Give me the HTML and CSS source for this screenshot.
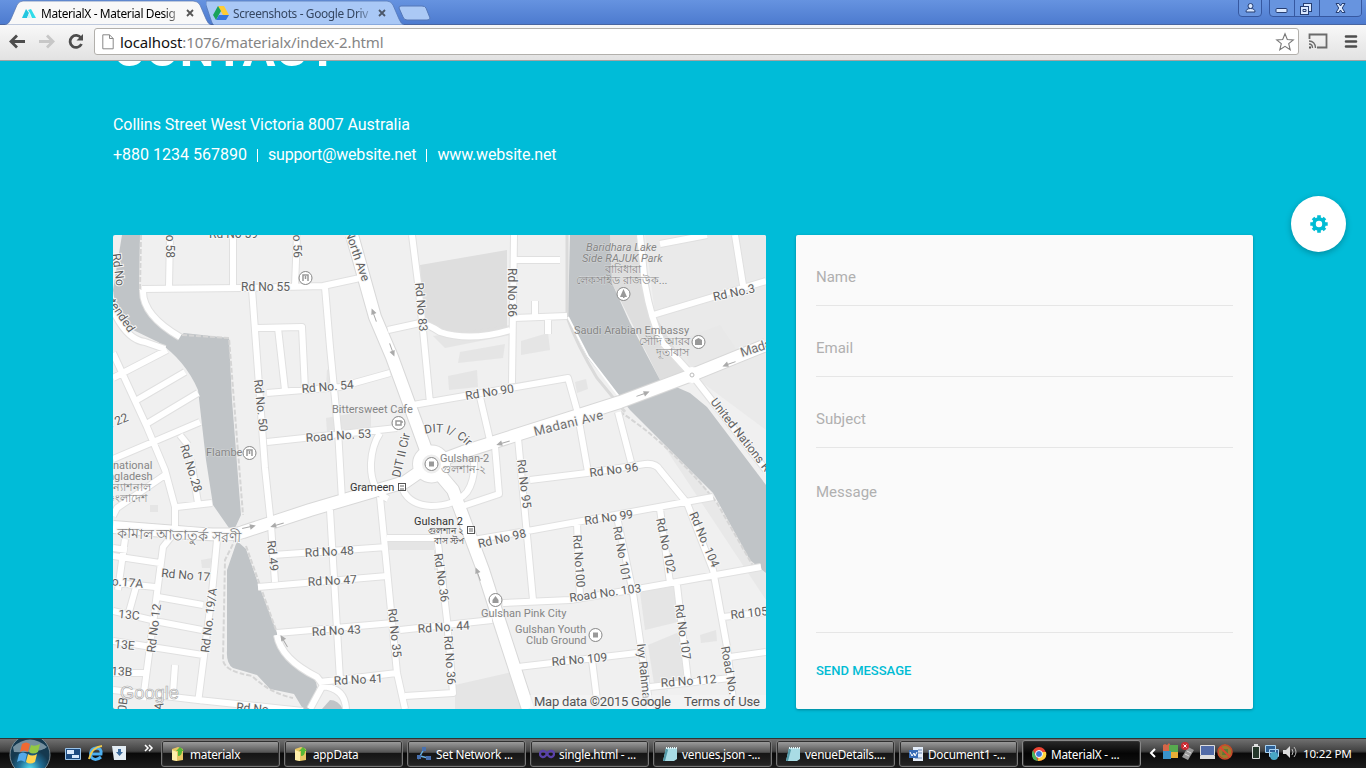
FILE: index.html
```html
<!DOCTYPE html>
<html lang="en">
<head>
<meta charset="utf-8">
<title>MaterialX - Material Design</title>
<link rel="stylesheet" href="styles.css">
</head>
<body>
<div class="screen">
  <header class="titlebar">
    <div class="tab tab-active">
      <svg class="tab-shape" width="206" height="25" viewBox="0 0 206 25"><path d="M0 25Q4 24 6 19L12 5Q14 1 18 1H188Q193 1 195 5L201 19Q203 24 206 25Z" fill="#f8f8f8" stroke="#5573ad" stroke-width=".7"/></svg>
      <svg class="favicon" width="16" height="16" viewBox="0 0 16 16"><path d="M1 13 5 4 8 8 6 13Z" fill="#21c6df"/><path d="M7 5 10 4 15 13H11L9 8Z" fill="#30dce9"/><path d="M6 13 8 8 10 13Z" fill="#c9f5fa"/></svg>
      <span class="tab-text">MaterialX - Material Desig</span><span class="tab-close"><svg width="8" height="8" viewBox="0 0 8 8"><path d="M1 1 7 7M7 1 1 7" stroke="#555" stroke-width="1.800"/></svg></span>
    </div>
    <div class="tab tab-idle">
      <svg class="tab-shape" width="200" height="25" viewBox="0 0 200 25"><path d="M0 1H181Q185 1 187 5L193 19Q195 24 198 25H8Q6 24 5 20L0 5Z" fill="#a9c8f6" stroke="#5578b8" stroke-width=".8"/></svg>
      <svg class="favicon" width="16" height="16" viewBox="0 0 16 16"><path d="M5 1H11L16 10H10Z" fill="#fc3"/><path d="M5 1 8 6 3 15 0 10Z" fill="#19a35b"/><path d="M6 10H16L13 15H3Z" fill="#3676dc"/></svg>
      <span class="tab-text">Screenshots - Google Driv</span><span class="tab-close"><svg width="8" height="8" viewBox="0 0 8 8"><path d="M1 1 7 7M7 1 1 7" stroke="#4b5769" stroke-width="1.800"/></svg></span>
    </div>
    <svg class="newtab" width="34" height="17" viewBox="0 0 34 17"><path d="M3 1H24Q27 1 28 3L32 13Q32 15 29 15H9Q6 15 5 12L1 3Q1 1 3 1Z" fill="#abc9f5" stroke="#5477b7"/></svg>
    <svg class="window-buttons" width="126" height="18" viewBox="0 0 126 18">
      <g fill="#6794df" stroke="#3658a0"><path d="M1.500-1V13Q1.500 16.500 5 16.500H21Q24.500 16.500 24.500 13V-1"/><path d="M32.500-1V13Q32.500 16.500 36 16.500H120Q124.500 16.500 124.500 13V-1M57.500 0V16.500M82.500 0V16.500"/></g>
      <g fill="#dbe9ff" stroke="#263e72" stroke-width="1"><circle cx="13.500" cy="6" r="2.500"/><path d="M9 12Q9 8.500 13.500 8.500T18 12Z"/><rect x="39" y="8.500" width="11" height="4" rx="1"/><rect x="66.500" y="3.500" width="8" height="8"/><rect x="63.500" y="6.500" width="8" height="8"/><path d="M66 9.500h3v2h-3z"/><path d="M99 3.500H102L103.500 6 105 3.500H108L105.300 8 108 12.500H105L103.500 10 102 12.500H99L101.700 8Z"/></g>
    </svg>
  </header>
  <nav class="toolbar">
    <svg class="nav-icons" width="86" height="30" viewBox="0 0 86 30"><g fill="none" stroke-width="2.800"><path d="M25 14.500H12M17 8.500 11 14.500 17 20.500" stroke="#4d4d4d"/><path d="M39 14.500H52M47 8.500 53 14.500 47 20.500" stroke="#c7c7c7"/><path d="M81 11A6 6 0 1 0 81.500 17" stroke="#4d4d4d"/></g><path d="M83 7V13.500H76.500Z" fill="#4d4d4d"/></svg>
    <div class="address">
      <svg width="12" height="16" viewBox="0 0 12 16"><path d="M.8.800H7.500L11.200 4.500V14.800H.8ZM7.500.800V4.500H11.200" fill="#fff" stroke="#888"/></svg>
      <span class="url"><span class="host">localhost</span>:1076/materialx/index-2.html</span>
      <svg class="star" width="20" height="20" viewBox="0 0 20 20"><path d="M10 1.800 12.300 7.500 18.300 7.900 13.700 11.700 15.200 17.700 10 14.400 4.800 17.700 6.300 11.700 1.700 7.900 7.700 7.500Z" fill="#fff" stroke="#777" stroke-width="1.100"/></svg>
    </div>
    <svg width="58" height="30" viewBox="0 0 58 30"><path d="M8.500 12V7.500H25.500V20.500H16" fill="none" stroke="#6b6b6b" stroke-width="1.800"/><path d="M8 14Q14 14 14.500 21M8 17Q11.500 17 11.500 21" fill="none" stroke="#6b6b6b" stroke-width="1.300"/><path d="M8 19.500h2v2H8z" fill="#555"/><path d="M45 9.500H55M45 14.500H55M45 19.500H55" stroke="#4d4d4d" stroke-width="2.600" stroke-linecap="round"/></svg>
  </nav>
  <main class="contact">
    <h1>CONTACT</h1>
    <address><div class="street">Collins Street West Victoria 8007 Australia</div><div class="links"><span>+880 1234 567890</span><span>support@website.net</span><span>www.website.net</span></div></address>
    <div class="panels">
      <svg class="map" width="653" height="474" viewBox="113 235 653 474">
        <defs>
          <path id="minor" d="M142 289 243 288 323 286 360 278M143 290Q142 315 180 337M170 235 169 287M233 235V287M297 235 295 286M252 289 265 468 271 525 275 582M257 328 302 327 305 390M278 328 285 390M267 393 340 387 390 373M325 287 330 347 338 430 342 500M267 442 397 428M412 235 418 283 423 330 430 403M388 330 420 323Q430 325 440 332Q470 342 510 330M514 235 512 383M513 260H560M514 318 567 316M535 301V317M548 318V334M413 405 430 402 568 378 577 410 588 472M480 397 490 440M495 446 499 494 460 507M518 438 533 600M618 412 631 462M530 480 587 473 645 464Q656 463 660 470L687 503 713 570 727 647 733 700M473 540 533 530 713 497M503 603 570 600 643 588 761 567M577 523 580 597M617 517 633 593 650 709M660 509 670 583M677 585 688 681M723 617 766 612M518 667 637 653M592 660 597 700M650 687 730 678M730 657 766 652M492 620 400 630M437 535 447 620 453 693 405 696M387 538H437M380 497 397 673 405 709M330 510 340 680M273 555 387 547M258 587 387 576M277 633 393 623M320 682 397 673M277 635Q281 659 317 677L323 685 310 709M322 686Q345 688 346 709M217 540 212 593 198 703M113 353 130 390 147 427 165 470 175 507 175 532 163 547 143 700M113 378 167 350M137 400 185 372M148 423 198 393M113 459 200 422M188 445 180 435M177 507 212 503M198 503 191 460M113 310Q127 340 145 342L165 349M113 516 117 508 165 475M113 548 127 550M113 556 160 563M125 539 118 590M117 583 155 587M158 597 203 605M136 587 129 612M160 622 202 630M113 611 160 622M113 641 203 655M113 673 145 673M175 665 173 693M113 690 198 700 303 711M380 433Q372 445 371 463Q370 490 388 499M403 490Q410 505 431 506Q455 506 467 492Q475 480 474 462M640 235 645 285Q651 319 662 342L692 375 766 470M660 244 707 235M735 235 743 285M653 315 766 281"/>
          <path id="major" d="M352 235 375 317 392 357 418 428 431 464 453 490 483 570 500 623 528 709M766 345 692 375 620 402 463 452 431 464 405 482 310 510 243 532Q232 537 177 532L113 527"/>
          <path id="arrow" d="M-7 .500H1V3L7 0 1-2.500V-.500H-7Z" fill="#aaa"/>
        </defs>
        <path d="M113 235H766V709H113Z" fill="#f0f0f0"/>
        <path d="M645 235H766V430L692 375 655 315Z" fill="#eaeaea"/><path d="M680 340 720 325 737 350 692 370ZM640 310 670 345 640 350ZM650 425 700 480 766 573V600Z" fill="#e8e8e8"/>
        <g fill="#dedede"><path d="M420 265 507 250V328L470 336 440 330 424 325Z"/><path d="M610 235H641L646 285 655 315 688 370 660 380 612 283Z"/><path d="M433 336 510 325V335L445 348ZM460 352 505 344 503 358 458 363ZM521 341 548 333 550 350 521 355ZM448 376 477 370 478 387 449 390ZM575 382 586 379 588 389 577 393ZM387 535H434V570H447V588H440V550H387ZM640 592 675 586 678 622 645 630ZM648 645 684 630 690 682 655 690ZM455 685 512 672 526 709H455ZM327 370 335 365 337 387 326 388ZM326 418 371 410V427L327 432ZM201 560 212 558 210 568 202 568ZM150 505 158 505 158 512 150 512ZM700 635 716 630 717 641 701 643Z" opacity=".6"/></g>
        <g fill="#c0c4c7"><path d="M122 235H140L139 290 147 311 176 338 184 333 229 338 232 400 241 515 235 528H229L213 505 206 460 198 390Q185 360 158 342L127 327 116 310 113 290Z"/><path d="M237 541 246 549 258 583 277 633 290 657 315 677 317 687 311 709H303L294 694 270 689 257 675 233 668Q226 664 227 650V570Z"/><path d="M570 235H610L612 283 630 323 660 380 690 393 707 407 766 485V573L750 560 713 493 697 477 630 410 587 357 568 317Z"/><path d="M322 709 330 700Q338 700 343 709Z"/></g>
        <path d="M567 235V317Q577 345 597 378L625 412" fill="none" stroke="#dadada" stroke-width="3"/><path d="M568 317 588 356 624 403" fill="none" stroke="#fff" stroke-width="2"/>
        <path d="M141 235 140 289M182 335 229 338 243 515M236 538 225 560 223 660Q224 671 252 676Q270 693 293 698M246 546 276 630M620 412Q668 442 717 503L753 566" fill="none" stroke="#d5d5d5" stroke-width="2" stroke-dasharray="5 2"/>
        <g fill="none" stroke-linejoin="round"><use href="#minor" stroke="#e0e0e0" stroke-width="8"/><use href="#major" stroke="#d8d8d8" stroke-width="14"/><circle cx="431.500" cy="464" r="14" stroke="#dcdcdc" stroke-width="11"/><use href="#minor" stroke="#fff" stroke-width="6"/><use href="#major" stroke="#fff" stroke-width="12"/><circle cx="431.500" cy="464" r="14" fill="#eee" stroke="#fff" stroke-width="9"/><circle cx="692" cy="375" r="8" fill="#fff"/><circle cx="692" cy="375" r="2" stroke="#bbb"/></g>
        <use href="#arrow" transform="translate(374 315) rotate(-110)"/><use href="#arrow" transform="translate(392 350) rotate(70)"/><use href="#arrow" transform="translate(503 443) rotate(163)"/><use href="#arrow" transform="translate(643 394) rotate(-20)"/><use href="#arrow" transform="translate(729 364) rotate(160)"/><use href="#arrow" transform="translate(249 527) rotate(-12)"/><use href="#arrow" transform="translate(277 525) rotate(164)"/><use href="#arrow" transform="translate(478 574) rotate(-110)"/><use href="#arrow" transform="translate(284 641) rotate(-120)"/>
        <g class="road-labels">
          <text transform="translate(241 291)">Rd No 55</text><text transform="translate(209 238)">Rd No 59</text><text transform="translate(166 209) rotate(90)">Rd No 58</text><text transform="translate(292 209) rotate(88)">Rd No 56</text><text transform="translate(345 232) rotate(71)">North Ave</text><text transform="translate(415 283) rotate(85)">Rd No 83</text><text transform="translate(508 268) rotate(90)">Rd No 86</text><text transform="translate(302 393) rotate(-5)">Rd No. 54</text><text transform="translate(306 442) rotate(-4)">Road No. 53</text><text transform="translate(254 380) rotate(84)">Rd No. 50</text><text transform="translate(112 254) rotate(82)">Rd No</text><text transform="translate(101 292) rotate(56)">Extended</text><text transform="translate(97 434) rotate(-23)">No. 22</text><text transform="translate(180 446) rotate(73)">Rd No.28</text><text transform="translate(466 400) rotate(-9)">Rd No 90</text><text class="avenue" transform="translate(535 436) rotate(-14)" textLength="71">Madani Ave</text><text class="avenue" transform="translate(742 357) rotate(-18)" textLength="42">Madani</text><text transform="translate(714 301) rotate(-12)">Rd No.3</text><text transform="translate(710 402) rotate(52)">United Nations Rd</text><text transform="translate(400 478) rotate(-77)">DIT II Cir</text>
          <path id="dit-arc" d="M425 434Q450 427 470 449" fill="none"/><text><textPath href="#dit-arc">DIT I/ Cir</textPath></text>
          <text transform="translate(517 460) rotate(83)">Rd No 95</text><text transform="translate(590 477) rotate(-7)">Rd No 96</text><text transform="translate(479 548) rotate(-13)">Rd No 98</text><text transform="translate(585 525) rotate(-8)">Rd No 99</text><text transform="translate(573 535) rotate(86)">Rd No100</text><text transform="translate(613 527) rotate(80)">Rd No 101</text><text transform="translate(656 519) rotate(78)">Rd No 102</text><text transform="translate(689 514) rotate(67)">Rd No. 104</text><text transform="translate(570 602) rotate(-8)">Road No. 103</text><text transform="translate(731 619) rotate(-6)">Rd 105</text><text transform="translate(552 666) rotate(-5)">Rd No 109</text><text transform="translate(661 687) rotate(-4)">Rd No 112</text><text transform="translate(675 605) rotate(82)">Rd No 107</text><text transform="translate(637 644) rotate(84)">Ivy Rahman</text><text transform="translate(721 647) rotate(80)">Road No.</text><text transform="translate(418 633) rotate(-4)">Rd No. 44</text><text transform="translate(434 554) rotate(82)">Rd No 36</text><text transform="translate(444 636) rotate(86)">Rd No 36</text><text transform="translate(388 609) rotate(84)">Rd No 35</text><text transform="translate(305 557) rotate(-3)">Rd No 48</text><text transform="translate(308 586) rotate(-3)">Rd No 47</text><text transform="translate(312 636) rotate(-3)">Rd No 43</text><text transform="translate(334 685) rotate(-3)">Rd No 41</text><text transform="translate(267 541) rotate(84)">Rd 49</text><text transform="translate(161 577) rotate(5)">Rd No 17</text><text transform="translate(86 583) rotate(5)">Rd No.17A</text><text transform="translate(118 618) rotate(5)">13C</text><text transform="translate(114 648) rotate(5)">13E</text><text transform="translate(111 675) rotate(3)">13B</text><text transform="translate(155 653) rotate(-83)">Rd No 12</text><text transform="translate(209 653) rotate(-83)">Rd No. 19/A</text><text transform="translate(236 711) rotate(5)">Rd No</text><text transform="translate(126 712) rotate(-83)">0B</text><text transform="translate(162 711) rotate(-78)">A</text>
          <text class="bengali-road" transform="translate(117 538) rotate(2)">কামাল আতাতুর্ক সরণী</text>
        </g>
        <g class="place-labels">
          <text x="332" y="413">Bittersweet Cafe</text><text x="206" y="456">Flambe</text><text x="574" y="334">Saudi Arabian Embassy</text><text x="639" y="345">সৌদি আরব</text><text x="656" y="356">দূতাবাস</text><g font-style="italic"><text x="586" y="251">Baridhara Lake</text><text x="582" y="262">Side RAJUK Park</text></g><text x="605" y="273">বারিধারা</text><text x="576" y="284">লেকসাইড রাজউক...</text><text x="440" y="462">Gulshan-2</text><text x="441" y="473">গুলশান-২</text><text x="481" y="617">Gulshan Pink City</text><text x="515" y="633">Gulshan Youth</text><text x="526" y="644">Club Ground</text><text x="113" y="469">national</text><text x="108" y="480">ngladesh</text><text x="107" y="491">রন্যাশনাল</text><text x="105" y="502">ংলাদেশ</text>
          <g class="station"><text x="350" y="491">Grameen</text><text x="414" y="525">Gulshan 2</text><text class="station-bn" x="428" y="534">গুলশান ২</text><text class="station-bn" x="434" y="544">বাস স্টপ</text></g>
        </g>
        <g fill="#fff" stroke="#888"><circle cx="305.500" cy="278" r="6.500"/><circle cx="398.500" cy="423" r="6.500"/><circle cx="249.500" cy="453" r="6.500"/><circle cx="431.500" cy="464" r="6.500"/><circle cx="623.500" cy="294" r="6.500"/><circle cx="698.500" cy="342" r="6.500"/><circle cx="495.500" cy="600" r="6.500"/><circle cx="595.500" cy="635" r="6.500"/><rect x="398.500" y="483.500" width="7" height="7" stroke="#555"/><rect x="467.500" y="526.500" width="7" height="7" stroke="#555"/></g>
        <g fill="none" stroke="#999" stroke-width="1.500"><path d="M303 281V275H308V281M305.500 276V279M247 456V450H252V456M249.500 451V454M396 421H401V425H396ZM401 422H403M400 486H404M400 489H404M469 529H473M469 531H473"/></g>
        <g fill="#999"><path d="M429 461.500h5v5h-5zM593 632.500h5v5h-5zM695 340 698.500 338 702 340V345H695ZM623.500 289 627 297H620ZM623 296h1.500v2H623zM492.500 603V600L495.500 596 498.500 600V603Z"/></g>
        <text class="google-logo" x="120" y="699" textLength="59" lengthAdjust="spacingAndGlyphs">Google</text>
        <path d="M530 695H766V709H530Z" fill="#f5f5f5" opacity=".65"/><g class="map-credit"><text x="534" y="706" textLength="137">Map data ©2015 Google</text><text x="684" y="706" textLength="76">Terms of Use</text></g>
      </svg>
      <form class="card"><div class="field">Name</div><div class="field">Email</div><div class="field">Subject</div><div class="field message">Message</div><div class="send">SEND MESSAGE</div></form>
    </div>
    <div class="settings"><svg width="18" height="18" viewBox="-9 -9 18 18"><circle r="5" fill="none" stroke="#00bcd4" stroke-width="3.600"/><g stroke="#00bcd4" stroke-width="3.600"><path d="M0-8.700V-5M0 5V8.700M-8.700 0H-5M5 0H8.700M-6-6-4-4M4 4 6 6M-6 6-4 4M4-4 6-6"/></g></svg></div>
  </main>
  <footer class="taskbar">
    <svg class="start" width="56" height="30" viewBox="0 0 56 30"><defs><radialGradient id="orb" cy=".85"><stop stop-color="#58e0f2"/><stop offset=".55" stop-color="#217098"/><stop offset="1" stop-color="#15394f"/></radialGradient></defs><circle cx="30" cy="16" r="20" fill="url(#orb)" stroke="#788992"/><path d="M13 8Q30-7 47 8Q40 14 14 13Z" fill="#a9bdc9" opacity=".65"/><path d="M22 5Q26 2 30 5L28 13Q24 10 20 13Z" fill="#ef6932"/><path d="M31 6Q35 8 40 5L38 13Q33 16 29 13Z" fill="#91c846"/><path d="M19 15Q23 12 27 15L25 23Q21 20 17 23Z" fill="#54a9e9"/><path d="M28 15Q32 18 37 15L35 23Q30 26 26 23Z" fill="#ffd34d"/></svg>
    <svg class="quick" width="105" height="30" viewBox="0 0 105 30"><path d="M9.500 9.500H24.500V20.500H9.500Z" fill="#1d4b80" stroke="#9bc4e9"/><path d="M11 11h7v4h-7zM16 16h7v3h-7z" fill="#d8e9fb"/><g fill="none"><path d="M45 18Q39 23 35 18Q33 10 40 9Q46 9 45 15H36" stroke="#4dafef" stroke-width="3"/><path d="M33 20Q36 8 46 7" stroke="#edc94d" stroke-width="2"/></g><path d="M56 7H70V21H58Z" fill="#e3edf4"/><path d="M62 10H65V13H67L63.500 17 60 13H62Z" fill="#3b6a9c"/><path d="M89 6 92 9 89 12M93 6 96 9 93 12" fill="none" stroke="#fff" stroke-width="1.500"/></svg>
    <div class="task"><svg class="task-icon" viewBox="0 0 16 16"><path d="M2 3 8 1 13 3V14L7 15 2 14Z" fill="#e7c765"/><path d="M2 4 7 6V15L2 14Z" fill="#fff0aa"/><path d="M6 5 10 1 14 5H12Q12 10 8 10V5Z" fill="#57b836"/></svg>materialx</div>
    <div class="task"><svg class="task-icon" viewBox="0 0 16 16"><path d="M2 3 8 1 13 3V14L7 15 2 14Z" fill="#e7c765"/><path d="M2 4 7 6V15L2 14Z" fill="#fff0aa"/><path d="M6 5 10 1 14 5H12Q12 10 8 10V5Z" fill="#57b836"/></svg>appData</div>
    <div class="task"><svg class="task-icon" viewBox="0 0 16 16"><path d="M8 3 4 10 12 12M4 10 2 13" stroke="#65aee0" fill="none" stroke-width="1.500"/><path d="M6 1h4v4H6zM1 9h4v4H1zM10 10h5v4h-5z" fill="#4770af"/></svg>Set Network ...</div>
    <div class="task"><svg class="task-icon" viewBox="0 0 16 16"><path d="M8 8C5 3 1 5 1 8S5 13 8 8 15 5 15 8 11 13 8 8" fill="none" stroke="#5942aa" stroke-width="2.300"/></svg>single.html - ...</div>
    <div class="task"><svg class="task-icon" viewBox="0 0 16 16"><path d="M4 2H15V13L12 15H1Z" fill="#a9dce5"/><path d="M4 2 1 15H3L6 4Z" fill="#5399a7"/><path d="M4 2H15" stroke="#e5f6f8" stroke-width="2" stroke-dasharray="1 1"/></svg>venues.json -...</div>
    <div class="task"><svg class="task-icon" viewBox="0 0 16 16"><path d="M4 2H15V13L12 15H1Z" fill="#a9dce5"/><path d="M4 2 1 15H3L6 4Z" fill="#5399a7"/><path d="M4 2H15" stroke="#e5f6f8" stroke-width="2" stroke-dasharray="1 1"/></svg>venueDetails....</div>
    <div class="task"><svg class="task-icon" viewBox="0 0 16 16"><path d="M5 1H15V15H5Z" fill="#e4edf9"/><path d="M10 4H14M10 7H14M7 12H14" stroke="#6684af"/><path d="M1 4H10V12H1Z" fill="#386cb6"/><path d="M2 6 4 10 6 7 7 10 9 6" fill="none" stroke="#fff"/></svg>Document1 -...</div>
    <div class="task task-active"><svg class="task-icon" viewBox="0 0 16 16"><circle cx="8" cy="8" r="7" fill="#eb4434"/><path d="M2 4 7 15Q0 14 1 7Z" fill="#49b45e"/><path d="M8 6H15Q17 14 7 15Z" fill="#ffd33d"/><circle cx="8" cy="8" r="3.500" fill="#3978d8" stroke="#fff"/></svg>MaterialX - ...</div>
    <svg class="tray" width="158" height="30" viewBox="0 0 158 30"><path d="M14 10 10 14 14 18" fill="none" stroke="#fff" stroke-width="2"/><path d="M22 6 24 5 26 6 28 4 30 7V12H22Z" fill="#d66647"/><path d="M28 6H37V13H28Z" fill="#57a94f"/><path d="M22 12H30V20H22Z" fill="#3992c9"/><path d="M30 13H37V19H30Z" fill="#e8ae36"/><path d="M47 8 53 11 47 21 41 18Z" fill="#999"/><path d="M46 12 50 14M44 15 48 17" stroke="#ddd"/><circle cx="44" cy="7" r="4" fill="#cc2c33"/><path d="M42.500 5.500 45.500 8.500M45.500 5.500 42.500 8.500" stroke="#fff"/><path d="M59.500 6.500H73.500V16.500H59.500Z" fill="#526ba7" stroke="#ddd"/><path d="M59 18.500H74" stroke="#ddd" stroke-width="3"/><path d="M78 9 84 5 91 10 90 18 83 20 77 16Z" fill="#9e7a2e"/><path d="M82 10H87V16H81Z" fill="#5c7b37"/><circle cx="84" cy="13" r="7" fill="none" stroke="#c84b2b" stroke-width="1.500"/><path d="M79 8 89 18" stroke="#e04530" stroke-width="2"/><path d="M111.500 7.500H118.500V19.500H111.500Z" fill="#25372a" stroke="#ddd"/><path d="M113 5h4v2h-4z" fill="#ddd"/><path d="M124.500 6.500H134.500V13.500H124.500ZM128.500 10.500H137.500V17.500H128.500Z" fill="#2d6197" stroke="#a9d2f1"/><circle cx="133" cy="17" r="4" fill="#48a7c5"/><path d="M142 11H145L149 7V19L145 15H142Z" fill="#ddd"/><path d="M151 10Q153 13 151 16M153 8Q157 13 153 18" fill="none" stroke="#bbb"/></svg>
    <span class="clock">10:22 PM</span>
  </footer>
</div>
</body>
</html>
```
FILE: styles.css
```css
* { box-sizing: border-box; }
body { margin: 0; overflow: hidden; font-family: Roboto, sans-serif; }
.screen { width: 1366px; height: 768px; display: flex; flex-direction: column; overflow: hidden; }
svg { flex: none; display: block; }
.titlebar { height: 25px; flex: none; display: flex; position: relative; padding-left: 5px; background: linear-gradient(#6693e0, #4d7bcf); border-bottom: 1px solid #4865a0; font: 12px "Noto Sans", sans-serif; }
.tab { position: relative; height: 25px; display: flex; align-items: center; }
.tab-active { width: 203px; padding-left: 16px; z-index: 2; }
.tab-idle { width: 190px; padding-left: 5px; color: #354762; }
.tab-shape { position: absolute; left: 0; top: 0; z-index: -1; }
.tab-idle { z-index: 1; }
.tab-idle .tab-shape { left: -2px; }
.favicon { margin-right: 4px; }
.tab-text { width: 137px; overflow: hidden; white-space: nowrap; line-height: 20px; font-size: 11.9px; letter-spacing: -.36px; -webkit-mask-image: linear-gradient(90deg, #000 90%, rgba(0,0,0,.3)); mask-image: linear-gradient(90deg, #000 90%, rgba(0,0,0,.3)); }
.tab-close { margin-left: 8px; }
.newtab { margin-top: 5px; }
.window-buttons { margin-left: auto; margin-right: 3px; }
.toolbar { height: 36px; flex: none; display: flex; align-items: center; padding: 0 7px 2px 0; background: linear-gradient(#f8f8f8, #e2e2e2); border-bottom: 1px solid #a3a3a3; z-index: 2; }
.address { width: 1205px; height: 27px; margin: 0 2px 0 8px; display: flex; align-items: center; gap: 6px; padding: 0 3px 0 7px; border: 1px solid #b2b0ac; border-radius: 3px; background: #fff; font: 15px "Noto Sans", sans-serif; letter-spacing: -.12px; }
.url { color: #858585; white-space: nowrap; line-height: 24px; }
.host { color: #111; }
.star { margin-left: auto; }
.contact { flex: 1; min-height: 0; position: relative; overflow: hidden; background: #00bcd8; padding: 0 113px; color: #fff; }
h1 { font-size: 49px; line-height: 48px; margin: -35px 0 0; font-weight: 700; letter-spacing: .5px; }
address { font-style: normal; font-size: 16px; line-height: 30px; margin-top: 36px; letter-spacing: -.07px; }
.links { display: flex; letter-spacing: -.17px; }
.links span:first-child { letter-spacing: 0; }
.links span + span { margin-left: 10px; padding-left: 11px; background: linear-gradient(#fff, #fff) 0 9px / 1px 13px no-repeat; }
.panels { display: flex; gap: 30px; margin-top: 65px; }
.map { border-radius: 2px; }
.card { width: 457px; height: 474px; border-radius: 2px; background: #fafafa; padding: 0 20px; box-shadow: 0 1px 3px rgba(0,0,0,.3); color: #b0b0b0; font-size: 15px; }
.field { height: 71px; padding: 32px 0 0; line-height: 20px; border-bottom: 1px solid #e6e6e6; }
.message { height: 185px; padding-top: 34px; }
.send { color: #00bcd4; font-size: 13px; font-weight: 500; margin-top: 28px; line-height: 20px; }
.settings { position: absolute; left: 1291px; top: 135px; width: 55px; height: 56px; border-radius: 50%; background: #fff; display: flex; align-items: center; justify-content: center; box-shadow: 0 2px 6px rgba(0,0,0,.26); }
.road-labels, .place-labels { font: 12px Roboto, "Noto Sans", sans-serif; fill: #606060; paint-order: stroke; stroke: #f7f7f7; stroke-width: 2px; }
.road-labels path { stroke: none; }
.avenue { font-size: 13px; fill: #707070; }
.bengali-road { font-size: 14px; fill: #777; }
.place-labels { font-size: 11px; fill: #858585; stroke: rgba(245,245,245,.4); stroke-width: 1px; }
.station { fill: #333; }
.station-bn { font-size: 9px; }
.google-logo { font: 19px "Liberation Sans", sans-serif; fill: #fff; stroke: #aaa; stroke-width: .7px; }
.map-credit { font: 13px Roboto, sans-serif; fill: #555; }
.taskbar { height: 30px; flex: none; display: flex; align-items: center; background: linear-gradient(#707070, #404040 42%, #090909 50%, #1c1c1c); border-top: 1px solid #333; color: #fff; font: 12px "Noto Sans", sans-serif; }
.task { width: 119px; height: 27px; flex: none; margin-right: 4px; display: flex; align-items: center; gap: 4px; white-space: nowrap; padding-left: 8px; border: 1px solid #777; border-radius: 3px; background: linear-gradient(#a2a2a2, #555 45%, #151515 50%, #252525); box-shadow: inset 0 0 0 1px #303030; font-size: 11.8px; letter-spacing: -.25px; }
.task-icon { width: 16px; height: 16px; }
.task-active { background: linear-gradient(#282828, #050505 50%, #111); border-color: #888; margin-right: 0; }
.clock { white-space: nowrap; font-size: 11.6px; margin-left: 4px; letter-spacing: -.2px; }
```
